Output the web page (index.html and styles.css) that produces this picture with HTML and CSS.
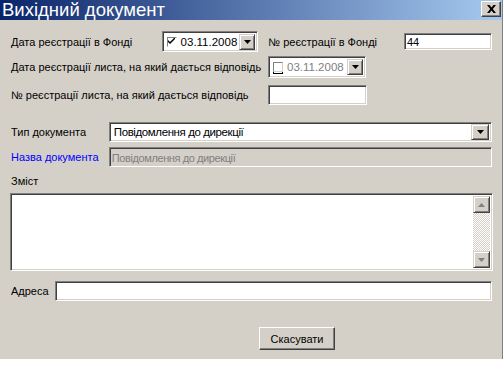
FILE: index.html
```html
<!DOCTYPE html>
<html lang="uk">
<head>
  <meta charset="UTF-8">
  <title>Вихідний документ</title>
  <link rel="stylesheet" href="styles.css">
</head>
<body>
  <div class="window">
    <div class="titlebar">
      <span class="title">Вихідний документ</span>
      <span class="close">
        <svg width="9" height="8" viewBox="0 0 9 8"><path d="M0 0h2.5L4.5 2.5 6.5 0H9L5.8 4 9 8H6.5L4.5 5.5 2.5 8H0l3.2-4z" fill="#000"/></svg>
      </span>
    </div>

    <div class="content">
      <div class="row r1">
        <span class="lbl w-date">Дата реєстрації в Фонді</span>
        <div class="date">
          <span class="chk"><svg width="7" height="7" viewBox="0 0 7 7"><path d="M0 2v2l2 2 5-5V-1L2 4z" fill="#000"/></svg></span>
          <span class="dtext">03.11.2008</span>
          <span class="dd"><svg width="7" height="4" viewBox="0 0 7 4"><path d="M0 0h7L3.5 4z" fill="#000"/></svg></span>
        </div>
        <span class="lbl w-num">№ реєстрації в Фонді</span>
        <input class="field num" type="text" value="44">
      </div>

      <div class="row r2">
        <span class="lbl w-long">Дата реєстрації листа, на який дається відповідь</span>
        <div class="date off">
          <span class="chk"></span>
          <span class="dtext">03.11.2008</span>
          <span class="dd"><svg width="7" height="4" viewBox="0 0 7 4"><path d="M0 0h7L3.5 4z" fill="#000"/></svg></span>
        </div>
      </div>

      <div class="row r3">
        <span class="lbl w-long">№ реєстрації листа, на який дається відповідь</span>
        <input class="field short" type="text" value="">
      </div>

      <div class="row r4">
        <span class="lbl w-type">Тип документа</span>
        <div class="select">
          <span class="stext">Повідомлення до дирекції</span>
          <span class="dd big"><svg width="7" height="4" viewBox="0 0 7 4"><path d="M0 0h7L3.5 4z" fill="#000"/></svg></span>
        </div>
      </div>

      <div class="row r5">
        <span class="lbl w-type blue">Назва документа</span>
        <input class="field wide disabled" type="text" value="Повідомлення до дирекції" disabled>
      </div>

      <div class="lbl zmist">Зміст</div>
      <div class="memo">
        <div class="memo-text"></div>
        <div class="vscroll">
          <span class="sbtn"><svg width="7" height="4" viewBox="0 0 7 4"><path d="M0 4h7L3.5 0z" fill="#808080"/></svg></span>
          <span class="track"></span>
          <span class="sbtn"><svg width="7" height="4" viewBox="0 0 7 4"><path d="M0 0h7L3.5 4z" fill="#808080"/></svg></span>
        </div>
      </div>

      <div class="row r6">
        <span class="lbl w-addr">Адреса</span>
        <input class="field addr" type="text" value="">
      </div>

      <div class="actions">
        <button class="btn">Скасувати</button>
      </div>
    </div>
  </div>
</body>
</html>
```

FILE: styles.css
```css
body {
  margin: 0;
  background: #fff;
  font-family: 'Liberation Sans', Arial, sans-serif;
  font-size: 11px;
  color: #000;
}
.window {
  width: 502px;
  height: 359px;
  background: #d4d0c8;
  border-right: 1px solid #808080;
  display: flex;
  flex-direction: column;
}
.titlebar {
  height: 20px;
  background: linear-gradient(to right, #0a246a, #a6caf0);
  display: flex;
  align-items: center;
  justify-content: space-between;
  padding: 0 1px 0 2px;
}
.title {
  color: #fff;
  font-size: 18.5px;
  line-height: 20px;
}
.close {
  width: 18px;
  height: 14px;
  background: #d4d0c8;
  border: 1px solid;
  border-color: #fff #404040 #404040 #fff;
  box-shadow: inset -1px -1px #808080;
  display: flex;
  align-items: center;
  justify-content: center;
  margin-top: -2px;
}
.content {
  padding: 0 10px;
}
.row {
  display: flex;
  align-items: center;
}
.lbl {
  padding-left: 1px;
  white-space: nowrap;
}
.blue {
  color: #0000ff;
}
.r1 { height: 21px; margin-top: 11px; }
.r2 { height: 22px; margin-top: 4px; }
.r3 { height: 20px; margin-top: 7px; }
.r4 { height: 20px; margin-top: 17px; }
.r5 { height: 20px; margin-top: 5px; }
.r6 { height: 20px; margin-top: 10px; }
.w-date { width: 151px; }
.w-num { width: 136px; padding-left: 10px; }
.w-long { width: 257px; }
.w-type { width: 98px; }
.w-addr { width: 44px; }

.field,
.date,
.select,
.memo {
  box-sizing: border-box;
  border: 1px solid;
  border-color: #808080 #fff #fff #808080;
  box-shadow: inset 1px 1px #404040, inset -1px -1px #d4d0c8;
  background: #fff;
}
.field {
  height: 18px;
  font: inherit;
  padding: 1px 2px 0;
  outline: none;
  margin: 0;
}
.num { width: 88px; height: 17px; }
.short { width: 99px; height: 20px; }
.wide { width: 384px; height: 20px; }
.addr { width: 438px; height: 20px; }
.disabled {
  background: #d4d0c8;
  color: #808080;
  letter-spacing: -0.4px;
}

.date {
  height: 21px;
  width: 97px;
  display: flex;
  align-items: center;
  padding: 2px;
}
.date.off {
  width: 98px;
  height: 22px;
}
.date.off .dtext {
  color: #808080;
}
.chk {
  box-sizing: border-box;
  width: 10px;
  height: 10px;
  margin-left: 2px;
  border: 1px solid;
  border-color: #808080 #fff #fff #808080;
  background: #fff;
  display: flex;
  align-items: center;
  justify-content: center;
}
.date.off .chk {
  border-color: #808080 #d4d0c8 #d4d0c8 #808080;
  box-shadow: 0 2px 0 -1px #fff, 0 2px 0 #000;
}
.dtext {
  margin-left: 4px;
  font-size: 11.5px;
  flex: 1;
}
.dd {
  box-sizing: border-box;
  width: 16px;
  height: 16px;
  background: #d4d0c8;
  border: 1px solid;
  border-color: #d4d0c8 #404040 #404040 #d4d0c8;
  box-shadow: inset 1px 1px #fff, inset -1px -1px #808080;
  display: flex;
  align-items: center;
  justify-content: center;
}
.dd.big {
  width: 18px;
}

.select {
  width: 384px;
  height: 20px;
  display: flex;
  align-items: center;
  padding: 2px;
}
.stext {
  flex: 1;
  padding-left: 2px;
  font-size: 11.5px;
  letter-spacing: -0.4px;
}

.zmist {
  margin-top: 7px;
  height: 14px;
  line-height: 14px;
}
.memo {
  margin-top: 5px;
  width: 483px;
  height: 78px;
  display: flex;
  padding: 2px;
}
.memo-text {
  flex: 1;
}
.vscroll {
  width: 17px;
  display: flex;
  flex-direction: column;
}
.sbtn {
  box-sizing: border-box;
  width: 17px;
  height: 17px;
  background: #d4d0c8;
  border: 1px solid;
  border-color: #d4d0c8 #404040 #404040 #d4d0c8;
  box-shadow: inset 1px 1px #fff, inset -1px -1px #808080;
  display: flex;
  align-items: center;
  justify-content: center;
}
.track {
  flex: 1;
  background: repeating-conic-gradient(#d4d0c8 0 25%, #fff 0 50%) 0 0 / 2px 2px;
}

.actions {
  display: flex;
  margin-top: 26px;
  padding-left: 249px;
}
.btn {
  width: 76px;
  height: 23px;
  font: inherit;
  background: #d4d0c8;
  border: 1px solid;
  border-color: #fff #404040 #404040 #fff;
  box-shadow: inset -1px -1px #808080;
  padding: 0;
}
```
